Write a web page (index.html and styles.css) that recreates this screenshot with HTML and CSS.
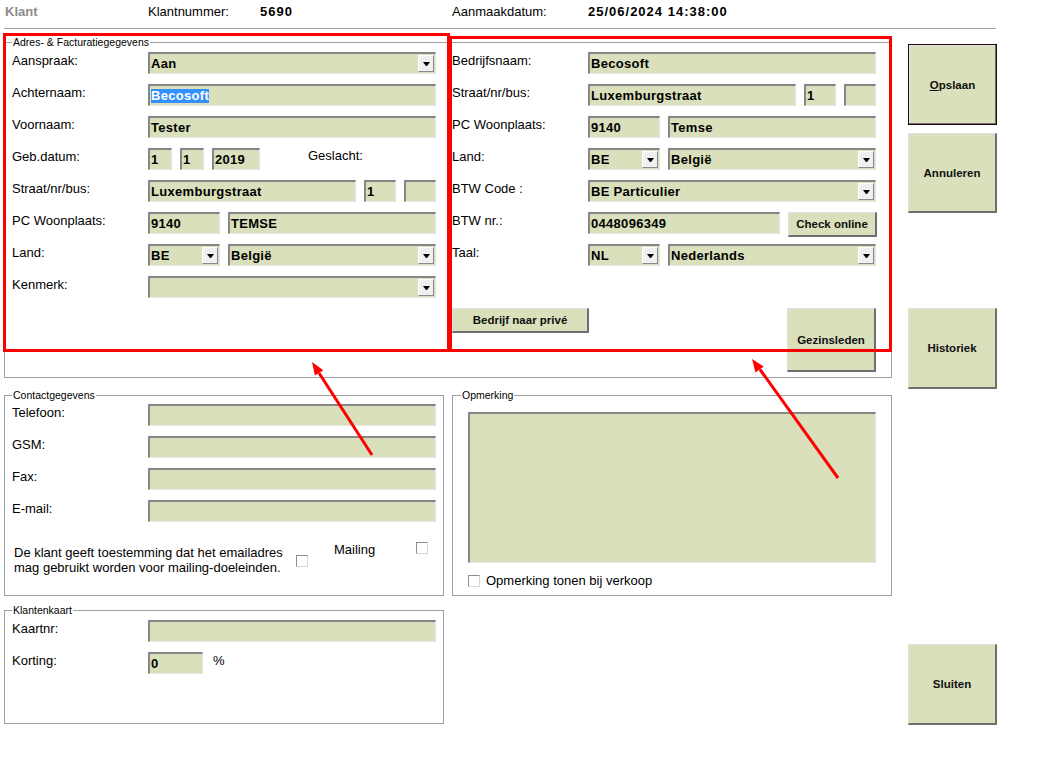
FILE: index.html
```html
<!DOCTYPE html>
<html lang="nl">
<head>
  <meta charset="UTF-8">
  <meta name="viewport" content="width=device-width, initial-scale=1.0">
  <title>Klant</title>
  <link rel="stylesheet" href="styles.css">
</head>
<body>
<div class="page">

  <!-- kopregel -->
  <div class="topbar">
    <span class="title">Klant</span>
    <span class="tb-label">Klantnummer:</span>
    <span class="tb-value tb-nr">5690</span>
    <span class="tb-label tb-datum">Aanmaakdatum:</span>
    <span class="tb-value">25/06/2024 14:38:00</span>
  </div>

  <div class="main">
    <div class="forms">

      <!-- adres en facturatie -->
      <fieldset class="frame frame-adres">
        <legend>Adres- &amp; Facturatiegegevens</legend>
        <div class="cols">
          <div class="col">
            <div class="row"><label>Aanspraak:</label><div class="field w-full"><span class="val">Aan</span><span class="drop"></span></div></div>
            <div class="row"><label>Achternaam:</label><div class="field w-full"><span class="val"><span class="selected">Becosoft</span></span></div></div>
            <div class="row"><label>Voornaam:</label><div class="field w-full"><span class="val">Tester</span></div></div>
            <div class="row">
              <label>Geb.datum:</label>
              <div class="field w-24"><span class="val">1</span></div>
              <div class="field w-24"><span class="val">1</span></div>
              <div class="field w-48"><span class="val">2019</span></div>
              <span class="geslacht">Geslacht:</span>
            </div>
            <div class="row">
              <label>Straat/nr/bus:</label>
              <div class="field w-208"><span class="val">Luxemburgstraat</span></div>
              <div class="field w-32"><span class="val">1</span></div>
              <div class="field w-32"></div>
            </div>
            <div class="row">
              <label>PC Woonplaats:</label>
              <div class="field w-72"><span class="val">9140</span></div>
              <div class="field w-208"><span class="val">TEMSE</span></div>
            </div>
            <div class="row">
              <label>Land:</label>
              <div class="field w-72"><span class="val">BE</span><span class="drop"></span></div>
              <div class="field w-208"><span class="val">België</span><span class="drop"></span></div>
            </div>
            <div class="row"><label>Kenmerk:</label><div class="field w-full"><span class="val"></span><span class="drop"></span></div></div>
          </div>

          <div class="col">
            <div class="row"><label>Bedrijfsnaam:</label><div class="field w-full"><span class="val">Becosoft</span></div></div>
            <div class="row">
              <label>Straat/nr/bus:</label>
              <div class="field w-208"><span class="val">Luxemburgstraat</span></div>
              <div class="field w-32"><span class="val">1</span></div>
              <div class="field w-32"></div>
            </div>
            <div class="row">
              <label>PC Woonplaats:</label>
              <div class="field w-72"><span class="val">9140</span></div>
              <div class="field w-208"><span class="val">Temse</span></div>
            </div>
            <div class="row">
              <label>Land:</label>
              <div class="field w-72"><span class="val">BE</span><span class="drop"></span></div>
              <div class="field w-208"><span class="val">België</span><span class="drop"></span></div>
            </div>
            <div class="row"><label>BTW Code :</label><div class="field w-full"><span class="val">BE Particulier</span><span class="drop"></span></div></div>
            <div class="row">
              <label>BTW nr.:</label>
              <div class="field w-192"><span class="val">0448096349</span></div>
              <button type="button" class="btn btn-check">Check online</button>
            </div>
            <div class="row">
              <label>Taal:</label>
              <div class="field w-72"><span class="val">NL</span><span class="drop"></span></div>
              <div class="field w-208"><span class="val">Nederlands</span><span class="drop"></span></div>
            </div>
            <div class="row-btns">
              <button type="button" class="btn btn-prive">Bedrijf naar privé</button>
              <button type="button" class="btn btn-gezin">Gezinsleden</button>
            </div>
          </div>
        </div>
      </fieldset>

      <div class="bottom">
        <!-- contact -->
        <fieldset class="frame frame-half">
          <legend>Contactgegevens</legend>
          <div class="col">
            <div class="row"><label>Telefoon:</label><div class="field w-full"></div></div>
            <div class="row"><label>GSM:</label><div class="field w-full"></div></div>
            <div class="row"><label>Fax:</label><div class="field w-full"></div></div>
            <div class="row"><label>E-mail:</label><div class="field w-full"></div></div>
          </div>
          <div class="consent">
            <p>De klant geeft toestemming dat het emailadres mag gebruikt worden voor mailing-doeleinden.</p>
            <span class="cb cb-consent"></span>
            <span class="mailing">Mailing</span>
            <span class="cb cb-mailing"></span>
          </div>
        </fieldset>

        <!-- opmerking -->
        <fieldset class="frame frame-half frame-opm">
          <legend>Opmerking</legend>
          <div class="memo"></div>
          <div class="cb-row"><span class="cb"></span><span>Opmerking tonen bij verkoop</span></div>
        </fieldset>
      </div>

      <!-- klantenkaart -->
      <fieldset class="frame frame-half frame-kaart">
        <legend>Klantenkaart</legend>
        <div class="col">
          <div class="row"><label>Kaartnr:</label><div class="field w-full"></div></div>
          <div class="row"><label>Korting:</label><div class="field w-55"><span class="val">0</span></div><span class="pct">%</span></div>
        </div>
      </fieldset>
    </div>

    <div class="side">
      <button type="button" class="btn btn-big btn-focus"><span><u>O</u>pslaan</span></button>
      <button type="button" class="btn btn-big btn-annuleren">Annuleren</button>
      <button type="button" class="btn btn-big btn-historiek">Historiek</button>
      <button type="button" class="btn btn-big btn-sluiten">Sluiten</button>
    </div>
  </div>

  <!-- rode markeringen -->
  <div class="mark mark-left"></div>
  <div class="mark mark-right"></div>
  <svg class="arrows" width="1043" height="782" viewBox="0 0 1043 782">
    <line x1="372" y1="455" x2="319" y2="373" stroke="#f00" stroke-width="3"/>
    <polygon points="312,362 323.3,370.2 314.9,375.6" fill="#f00"/>
    <line x1="838" y1="478" x2="760" y2="369.5" stroke="#f00" stroke-width="3"/>
    <polygon points="752,359 763.7,366.6 755.5,372.4" fill="#f00"/>
  </svg>
</div>
</body>
</html>
```

FILE: styles.css
```css
/* basis */
body {
  margin: 0;
  font-family: "Liberation Sans", Arial, sans-serif;
  font-size: 13px;
  color: #000;
  background-color: #fff;
}
.page {
  position: relative;
  width: 1043px;
  height: 782px;
  overflow: hidden;
}

/* kopregel */
.topbar {
  display: flex;
  margin-left: 4px;
  width: 992px;
  padding: 4px 0 8px 0;
  line-height: 16px;
  border-bottom: 1px solid #a0a0a0;
}
.title {
  width: 143px;
  padding-left: 1px;
  font-weight: bold;
  color: #8c8c8c;
}
.tb-label {
  width: 112px;
}
.tb-datum {
  width: 136px;
}
.tb-value {
  font-weight: bold;
  letter-spacing: 1px;
}
.tb-nr {
  width: 192px;
}

/* layout */
.main {
  display: flex;
}
.forms {
  margin-left: 4px;
  width: 888px;
}
.side {
  width: 89px;
  margin-left: 16px;
  padding-top: 15px;
  display: flex;
  flex-direction: column;
}

/* kaders */
fieldset.frame {
  margin: 0;
  min-width: 0;
  box-sizing: border-box;
  border: 1px solid #a0a0a0;
  padding: 3px 15px 5px 7px;
}
legend {
  font-size: 10.5px;
  line-height: 13px;
  padding: 0 1px;
}
.frame-adres {
  margin-top: 7px !important;
  width: 888px;
}
.cols {
  display: flex;
  gap: 16px;
}
.col {
  width: 424px;
  display: flex;
  flex-direction: column;
  gap: 10px;
}
.row {
  display: flex;
  align-items: flex-start;
  gap: 8px;
  height: 22px;
}
.row label {
  width: 128px;
  flex: none;
  padding-top: 1px;
  line-height: 16px;
}
.geslacht {
  margin-left: 40px;
  line-height: 16px;
}
.pct {
  margin-left: 2px;
  padding-top: 1px;
  line-height: 16px;
}

/* invoervelden */
.field {
  flex: none;
  height: 22px;
  box-sizing: border-box;
  display: flex;
  align-items: center;
  background-color: #d9e0bb;
  border-top: 2px solid #878787;
  border-left: 2px solid #878787;
  border-right: 1px solid #e4e4e4;
  border-bottom: 1px solid #e4e4e4;
  font-weight: bold;
}
.val {
  padding-left: 1px;
  line-height: 16px;
  letter-spacing: 0.3px;
  white-space: nowrap;
}
.selected {
  display: inline-block;
  background-color: #3390ff;
  color: #fff;
  line-height: 14px;
}
.w-full { width: 288px; }
.w-208 { width: 208px; }
.w-192 { width: 192px; }
.w-72 { width: 72px; }
.w-55 { width: 55px; }
.w-48 { width: 48px; }
.w-32 { width: 32px; }
.w-24 { width: 24px; }

.drop {
  margin-left: auto;
  margin-right: 1px;
  width: 16px;
  height: 17px;
  box-sizing: border-box;
  background-color: #f0f0f0;
  border: 1px solid;
  border-color: #fff #8a8a8a #8a8a8a #fff;
  display: flex;
  align-items: center;
  justify-content: center;
}
.drop::after {
  content: "";
  width: 1px;
  height: 0;
  border-left: 3px solid transparent;
  border-right: 3px solid transparent;
  border-top: 4px solid #000;
}

/* knoppen */
.btn {
  flex: none;
  box-sizing: border-box;
  padding: 0;
  background-color: #d9e0bb;
  border-style: solid;
  border-width: 1px 2px 2px 1px;
  border-color: #e0e0e0 #6f6f6f #6f6f6f #e0e0e0;
  font-family: "Liberation Sans", Arial, sans-serif;
  font-size: 11.5px;
  font-weight: bold;
  color: #111;
  display: flex;
  align-items: center;
  justify-content: center;
}
.btn-check {
  width: 89px;
  height: 25px;
}
.row-btns {
  display: flex;
  justify-content: space-between;
  margin-top: 32px;
}
.btn-prive {
  width: 137px;
  height: 25px;
}
.btn-gezin {
  width: 89px;
  height: 64px;
}
.btn-big {
  width: 89px;
  height: 81px;
}
.btn-focus {
  border: 1px solid #1c0808;
  box-shadow: inset -1px -1px 0 #707070, inset 1px 1px 0 #e6e6e6;
}
.btn-annuleren {
  margin-top: 8px;
  height: 80px;
}
.btn-historiek {
  margin-top: 95px;
}
.btn-sluiten {
  margin-top: 255px;
}

/* onderste kaders */
.bottom {
  display: flex;
  gap: 8px;
  margin-top: 11px;
}
.frame-half {
  width: 440px;
  height: 207px;
  padding: 2px 7px 0 7px !important;
}
.frame-opm {
  padding: 10px 15px 0 15px !important;
}
.frame-opm legend {
  margin-left: -7px;
}
.frame-kaart {
  margin-top: 8px !important;
  height: 120px;
  padding-top: 3px !important;
}

.consent {
  display: flex;
  align-items: flex-start;
  margin-top: 23px;
  padding-left: 2px;
}
.consent p {
  width: 282px;
  margin: 0;
  line-height: 15px;
}
.cb {
  flex: none;
  width: 12px;
  height: 12px;
  box-sizing: border-box;
  background-color: #fff;
  border: 1px solid;
  border-color: #8e8e8e #d8d8d8 #d8d8d8 #8e8e8e;
}
.cb-consent {
  margin-top: 10px;
}
.mailing {
  width: 82px;
  margin-left: 26px;
  margin-top: -3px;
  line-height: 15px;
}
.cb-mailing {
  margin-top: -3px;
}

.memo {
  width: 408px;
  height: 151px;
  box-sizing: border-box;
  background-color: #d9e0bb;
  border-top: 2px solid #878787;
  border-left: 2px solid #878787;
  border-right: 1px solid #e4e4e4;
  border-bottom: 1px solid #e4e4e4;
}
.cb-row {
  display: flex;
  align-items: center;
  gap: 6px;
  margin-top: 10px;
  line-height: 15px;
}

/* rode markeringen */
.mark {
  position: absolute;
  border: 3px solid #f00;
}
.mark-left {
  left: 3px;
  top: 33px;
  width: 441px;
  height: 313px;
}
.mark-right {
  left: 449px;
  top: 36px;
  width: 437px;
  height: 310px;
}
.arrows {
  position: absolute;
  left: 0;
  top: 0;
  pointer-events: none;
}
```
